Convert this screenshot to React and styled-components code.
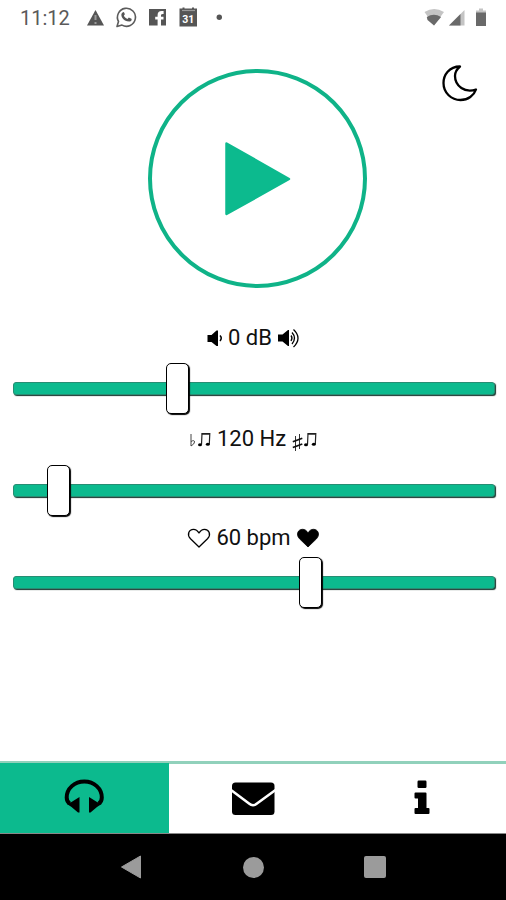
import React from "react";

import styled, { createGlobalStyle } from "styled-components";

const green = "#0cba8e";

const controls = [
  { name: "volume", value: "0 dB", thumb: 152, top: 5, gap: 32, low: <QuietIcon />, high: <LoudIcon /> },
  { name: "pitch", value: "120 Hz", thumb: 33, top: 5, gap: 33, low: <FlatIcon />, high: <SharpIcon /> },
  { name: "tempo", value: "60 bpm", thumb: 285, top: 3, gap: 26, low: <HeartIcon />, high: <HeartIcon filled /> },
];

const App = () => {
  return (
    <>
      <GlobalStyle />
      <Screen>
        <StatusBar>
          <Clock>11:12</Clock>
          <Notifications />
          <Signals />
        </StatusBar>

        <Main>
          <PlayArea>
            <PlayButton aria-label="Play">
              <svg width="68" height="76" viewBox="0 0 68 76">
                <path
                  d="M2.5 2.5L65 38L2.5 73Z"
                  fill={green}
                  stroke={green}
                  strokeWidth="2.5"
                  strokeLinejoin="round"
                />
              </svg>
            </PlayButton>
            <ThemeButton aria-label="Dark mode">
              <MoonIcon />
            </ThemeButton>
          </PlayArea>

          {controls.map((c) => (
            <Control key={c.name} $top={c.top}>
              <Label>
                {c.low}
                <Value>{c.value}</Value>
                {c.high}
              </Label>
              <Track $gap={c.gap}>
                <Thumb style={{ left: c.thumb }} />
              </Track>
            </Control>
          ))}
        </Main>

        <Tabs>
          <Tab $active aria-label="Listen">
            <HeadphonesIcon />
          </Tab>
          <Tab aria-label="Contact">
            <MailIcon />
          </Tab>
          <Tab aria-label="About">
            <InfoIcon />
          </Tab>
        </Tabs>

        <SystemBar>
          <svg width="22" height="26" viewBox="0 0 22 26">
            <path d="M1.5 13L20.5 2V24Z" fill="#9b9b9b" stroke="#9b9b9b" strokeLinejoin="round" />
          </svg>
          <HomeKey />
          <RecentKey />
        </SystemBar>
      </Screen>
    </>
  );
};

export default App;

function Notifications() {
  return (
    <svg width="144" height="28" viewBox="84 4 144 28" fill="#555">
      <path d="M95.5 10L104 25.5H87Z" />
      <path d="M95.5 15v5M95.5 22v2" stroke="#999" strokeWidth="2" />
      <path
        d="M117 26.5l1.5-5a9 9 0 1 1 3.5 3.6Z"
        fill="none"
        stroke="#5c5c5c"
        strokeWidth="1.6"
        strokeLinejoin="round"
      />
      <path d="M122.500 12.5c-3 2 0 9 7 9 2 0 2.500-2 2-2.800l-2.700-1.200-1.300 1.400c-2-.6-3-1.700-3.600-3.400l1-1.200-1-2.300Z" />
      <path d="M149 9h17v16.500h-5v-6h2.500v-2.800H161v-1.500q0-1.500 2.600-1.300v-2.800q-6-1-6 3.800v1.800h-2.400v2.800h2.400v6H149Z" />
      <path d="M179.500 8.500h3V7.500h2v1h7.500V7.500h2v1h3V26.500h-17.500Z" />
      <path d="M182 10.500h13" stroke="#999" strokeWidth="1.200" />
      <text x="188.300" y="23" textAnchor="middle" fontFamily="Roboto, sans-serif" fontSize="10.500" fontWeight="700" fill="#fff">
        31
      </text>
      <circle cx="219.300" cy="17.300" r="2.700" />
    </svg>
  );
}

function Signals() {
  return (
    <svg width="66" height="28" viewBox="422 4 66 28">
      <path d="M424.500 12q9.700-6 19.500 0L434 25.500Z" fill="#c4c4c4" />
      <path d="M427.500 20L426.800 17q7-4.500 14.300 0L434 25.500Z" fill="#696969" />
      <path d="M449 25.500L464.500 10V25.500Z" fill="#c4c4c4" />
      <path d="M449 25.500L460.500 14V25.500Z" fill="#696969" />
      <path d="M476 13v-2.500h3V8.500h4v2h3V13Z" fill="#c4c4c4" />
      <path d="M476 12.500h10V26h-10Z" fill="#696969" />
    </svg>
  );
}

function MoonIcon() {
  return (
    <svg width="38" height="40" viewBox="441 63 38 40">
      <path
        d="M460 66.500C449 66.500 443.500 75 443.500 83C443.500 93 451.500 100 460.500 100C468 100 474 95.500 476 89.500C465 93.500 455 86 455 76C455 72 457 69 460 66.500Z"
        fill="none"
        stroke="#000"
        strokeWidth="2.300"
        strokeLinejoin="round"
      />
    </svg>
  );
}

function QuietIcon() {
  return (
    <svg width="17" height="24" viewBox="206 325 17 24">
      <path d="M207.500 334h4l5-4.500h1.500v15.500h-1.500l-5-4h-4Z" />
      <path d="M220 334.500q2.500 2.500 0 5.500" fill="none" stroke="#000" strokeWidth="1.500" />
    </svg>
  );
}

function LoudIcon() {
  return (
    <svg width="24" height="24" viewBox="277 325 24 24">
      <path d="M278 333.500h4.500l5.500-4.500h1v16h-1l-5.500-4.500H278Z" />
      <path
        d="M291 334.500q2 2.500 0 5.500M292 331.500q5 5.500 0 11.500M293.500 328.500q9 8.500 0 17.500"
        fill="none"
        stroke="#000"
        strokeWidth="1.300"
      />
    </svg>
  );
}

function FlatIcon() {
  return (
    <svg width="22" height="24" viewBox="190 426 22 24">
      <path d="M191 433v12M191 440.500q3.500-2 3.500.5 0 2-3.500 4" fill="none" stroke="#444" strokeWidth="1" />
      <path d="M201.500 443.500l.5-11h7.800l-.5 10.500" fill="none" stroke="#222" strokeWidth="1.200" />
      <path d="M201.800 433h8" stroke="#222" strokeWidth="1.500" />
      <ellipse cx="200" cy="443.800" rx="2" ry="1.500" />
      <ellipse cx="207.800" cy="443.300" rx="2" ry="1.500" />
    </svg>
  );
}

function SharpIcon() {
  return (
    <svg width="26" height="24" viewBox="292 426 26 24">
      <path d="M296.500 435v15M300.500 433v15" stroke="#333" strokeWidth="1" />
      <path d="M293.800 440.800l9.500-3.500M293.800 446.500l9.500-3.500" stroke="#111" strokeWidth="1.700" />
      <path d="M308.500 443.500l.5-11h7.800l-.5 10.500" fill="none" stroke="#222" strokeWidth="1.200" />
      <path d="M308.800 433h8" stroke="#222" strokeWidth="1.500" />
      <ellipse cx="307" cy="443.800" rx="2" ry="1.500" />
      <ellipse cx="314.800" cy="443.300" rx="2" ry="1.500" />
    </svg>
  );
}

function HeartIcon({ filled }) {
  return (
    <svg width="24" height="24" viewBox="0 0 24 24">
      <path
        d="M12 21L3.500 12.800C-.5 8.500 2 3.300 6.500 3.300C9 3.300 10.500 4.500 12 7C13.500 4.500 15 3.300 17.500 3.300C22 3.300 24.500 8.500 20.500 12.800Z"
        fill={filled ? "#000" : "none"}
        stroke="#000"
        strokeWidth={filled ? 0.8 : 1.3}
        strokeLinejoin="round"
      />
    </svg>
  );
}

function HeadphonesIcon() {
  return (
    <svg width="42" height="38" viewBox="63.500 779 42 38">
      <path
        d="M70.500 803.500C68 802.500 67.200 800 67.200 797.500C67.200 788.500 75 781.500 84.800 781.500S102.300 788.500 102.300 797.500C102.300 800 101.500 802.500 99 803.500"
        fill="none"
        stroke="#000"
        strokeWidth="4"
      />
      <path d="M67.500 804L72 802L80 797v15.500h-1.500L72 807ZM102 804L97.500 802L89.500 797v15.500h1.500L97.500 807Z" />
    </svg>
  );
}

function MailIcon() {
  return (
    <svg width="44" height="36" viewBox="231.500 781 44 36">
      <rect x="232.500" y="782.500" width="42.500" height="32.500" rx="3.500" />
      <path d="M231.500 790L249.500 803.500q4 3.500 8 0L276 790" fill="none" stroke="#fff" strokeWidth="2.500" />
    </svg>
  );
}

function InfoIcon() {
  return (
    <svg width="17" height="36" viewBox="413.500 780 17 36">
      <rect x="418" y="779.500" width="9" height="7.500" rx="1.200" />
      <path d="M416 791.500h10q1 0 1 1v14.500h2q1 0 1 1v4q0 1-1 1h-13q-1 0-1-1v-4q0-1 1-1h2.500v-9.500H416q-1 0-1-1v-4q0-1 1-1Z" />
    </svg>
  );
}

const GlobalStyle = createGlobalStyle`
  * {
    box-sizing: border-box;
  }

  body {
    margin: 0;
    background: #fff;
    font-family: Roboto, sans-serif;
  }

  svg {
    display: block;
    flex-shrink: 0;
    overflow: visible;
  }

  button {
    padding: 0;
    border: 0;
    background: none;
  }
`;

const Screen = styled.div`
  width: 506px;
  height: 900px;
  display: flex;
  flex-direction: column;
  overflow: hidden;
`;

const StatusBar = styled.header`
  height: 36px;
  padding: 0 18px 0 20px;
  display: flex;
  align-items: center;

  > svg:last-child {
    margin-left: auto;
  }
`;

const Clock = styled.span`
  width: 64px;
  color: #5a5a5a;
  font-size: 20px;
`;

const Main = styled.main`
  flex: 1;
  min-height: 0;
`;

const PlayArea = styled.section`
  height: 285px;
  padding: 27px 27px 0 148px;
  display: flex;
  justify-content: space-between;
  align-items: flex-start;
`;

const PlayButton = styled.button`
  width: 219px;
  height: 219px;
  margin-top: 6px;
  border: 4px solid #0fb388;
  border-radius: 50%;
  display: flex;
  align-items: center;
  justify-content: center;
`;

const ThemeButton = styled.button`
  width: 38px;
  height: 40px;
`;

const Control = styled.section`
  height: 101px;
  padding: ${(p) => p.$top}px 11px 0 13px;
`;

const Label = styled.div`
  height: 24px;
  margin-left: -1px;
  display: flex;
  align-items: center;
  justify-content: center;
  gap: 5px;
`;

const Value = styled.span`
  color: #111;
  font-size: 22px;
  line-height: 24px;
  white-space: nowrap;
`;

const Track = styled.div`
  position: relative;
  height: 13px;
  margin-top: ${(p) => p.$gap}px;
  border: 1px solid #278d73;
  border-radius: 3px;
  background: ${green};
  box-shadow: 1px 1px 1px #17352d;
`;

const Thumb = styled.div`
  position: absolute;
  top: -20px;
  width: 23px;
  height: 51px;
  border: 1px solid #000;
  border-radius: 5px;
  background: #fff;
  box-shadow: 1px 1px 1px #000;
`;

const Tabs = styled.nav`
  height: 73px;
  border-top: 3px solid #91d1bb;
  border-bottom: 1px solid #888;
  display: flex;
`;

const Tab = styled.button`
  flex: 1;
  display: flex;
  align-items: center;
  justify-content: center;
  margin-top: ${(p) => (p.$active ? -1 : 0)}px;
  background: ${(p) => (p.$active ? green : "#fff")};
`;

const SystemBar = styled.footer`
  height: 66px;
  padding: 0 120px;
  display: flex;
  align-items: center;
  justify-content: space-between;
  background: #000;
`;

const HomeKey = styled.span`
  width: 21px;
  height: 21px;
  border-radius: 50%;
  background: #9b9b9b;
`;

const RecentKey = styled.span`
  width: 22px;
  height: 22px;
  border-radius: 2px;
  background: #9b9b9b;
`;
